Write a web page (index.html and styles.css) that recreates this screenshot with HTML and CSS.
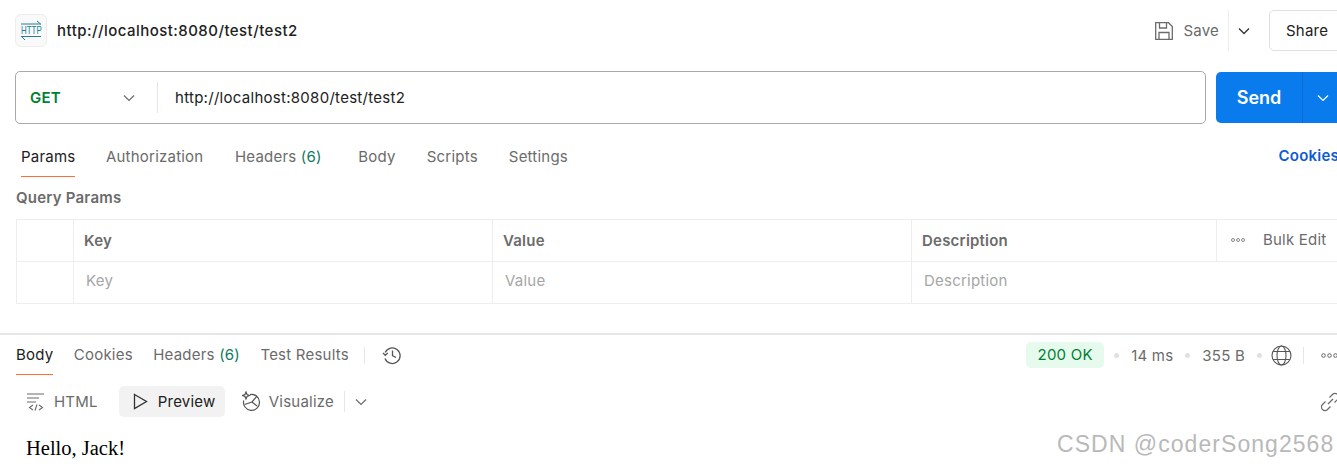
FILE: index.html
```html
<!DOCTYPE html>
<html lang="en">
<head>
<meta charset="utf-8">
<title>http://localhost:8080/test/test2</title>
<link rel="stylesheet" href="styles.css">
</head>
<body>
<div class="app">
  <header class="top">
    <div class="req-icon">
      <svg width="22" height="22" viewBox="0 0 22 22" fill="none" stroke="#217f8f" stroke-width="1">
        <path d="M1 5H21M17 2L20.500 5"/>
        <path d="M1 17.500H21M5 21L1.500 17.500"/>
      </svg>
      <span class="http">HTTP</span>
    </div>
    <div class="req-name">http://localhost:8080/test/test2</div>
    <div class="save">
      <svg width="20" height="20" viewBox="0 0 20 20" fill="none" stroke="#6b6b6b" stroke-width="1.300"><path d="M1.700 1.700H14.500L18.300 5.500V18.300H1.700Z"/><path d="M5.500 1.700V7H12.500V1.700"/><path d="M5 18.300V11.500H15V18.300"/></svg>
      <span>Save</span>
    </div>
    <div class="save-more"><svg width="12" height="8" viewBox="0 0 12 8" fill="none" stroke="#333" stroke-width="1.300"><path d="M1 1.500L6 6.500L11 1.500"/></svg></div>
    <div class="share">Share</div>
  </header>

  <section class="url-row">
    <div class="url-box">
      <div class="method"><span>GET</span><svg width="12" height="8" viewBox="0 0 12 8" fill="none" stroke="#6b6b6b" stroke-width="1.200"><path d="M1 1.500L6 6.500L11 1.500"/></svg></div>
      <div class="url">http://localhost:8080/test/test2</div>
    </div>
    <div class="send">
      <span class="send-label">Send</span>
      <span class="send-more"><svg width="12" height="8" viewBox="0 0 12 8" fill="none" stroke="#fff" stroke-width="1.200"><path d="M1 1.500L6 6.500L11 1.500"/></svg></span>
    </div>
  </section>

  <nav class="req-tabs">
    <span class="tab active">Params</span>
    <span class="tab t-auth">Authorization</span>
    <span class="tab t-head">Headers <i>(6)</i></span>
    <span class="tab t-body">Body</span>
    <span class="tab t-scr">Scripts</span>
    <span class="tab">Settings</span>
    <span class="cookies">Cookies</span>
  </nav>

  <h2 class="qp">Query Params</h2>

  <div class="table">
    <div class="cell"></div>
    <div class="cell head">Key</div>
    <div class="cell head">Value</div>
    <div class="cell head">Description</div>
    <div class="cell bulk">
      <svg width="14" height="4" viewBox="0 0 14 4" fill="none" stroke="#6b6b6b" stroke-width=".8"><circle cx="2" cy="2" r="1.500"/><circle cx="7" cy="2" r="1.500"/><circle cx="12" cy="2" r="1.500"/></svg>
      <span>Bulk Edit</span>
    </div>
    <div class="cell"></div>
    <div class="cell ph">Key</div>
    <div class="cell ph">Value</div>
    <div class="cell ph wide">Description</div>
  </div>

  <section class="response">
    <div class="res-bar">
      <span class="rtab active">Body</span>
      <span class="rtab">Cookies</span>
      <span class="rtab">Headers <i>(6)</i></span>
      <span class="rtab">Test Results</span>
      <span class="vsep"></span>
      <svg class="hist" width="20" height="20" viewBox="0 0 20 20" fill="none" stroke="#555" stroke-width="1.300"><path d="M3.200 7.500A7.800 7.800 0 1 1 3 13.500"/><path d="M1 8L3.300 10.300L5.800 8"/><path d="M10.500 5.500V10.500L14 12.500"/></svg>
      <div class="stats">
        <span class="ok">200 OK</span>
        <b class="dot"></b><span>14 ms</span>
        <b class="dot"></b><span>355 B</span>
        <b class="dot"></b>
        <svg width="21" height="21" viewBox="0 0 21 21" fill="none" stroke="#555" stroke-width="1.100"><circle cx="10.500" cy="10.500" r="9.500"/><ellipse cx="10.500" cy="10.500" rx="4.500" ry="9.500"/><path d="M2 6.500H19M2 14.500H19"/></svg>
        <span class="vsep s2"></span>
        <svg width="17" height="5" viewBox="0 0 17 5" fill="none" stroke="#555" stroke-width=".9"><circle cx="2.500" cy="2.500" r="1.800"/><circle cx="8.500" cy="2.500" r="1.800"/><circle cx="14.500" cy="2.500" r="1.800"/></svg>
      </div>
    </div>

    <div class="view-bar">
      <span class="view v-html">
        <svg width="18" height="20" viewBox="0 0 18 20" fill="none" stroke="#6b6b6b" stroke-width="1.100"><path d="M0 2H17M0 6H12M0 10H9"/><path d="M6 13L2.500 15.500L6 18M12 13L15.500 15.500L12 18M10 12.500L8 18.500"/></svg>
        HTML
      </span>
      <span class="view v-prev">
        <svg width="15" height="17" viewBox="0 0 15 17" fill="none" stroke="#333" stroke-width="1.300"><path d="M1.500 1.500L13.500 8.500L1.500 15.500Z"/></svg>
        Preview
      </span>
      <span class="view v-vis">
        <svg width="20" height="21" viewBox="0 0 20 21" fill="none" stroke="#555" stroke-width="1.200"><path d="M8 3.500A8 8 0 1 1 1.700 9.500"/><path d="M2.500 13.500L10 11L15 5"/><path d="M10 11L15 15"/><path d="M4 1L5 3.500L7.500 4.500L5 5.500L4 8L3 5.500L.5 4.500L3 3.500Z"/></svg>
        Visualize
      </span>
      <span class="vsep s3"></span>
      <svg class="v-chev" width="12" height="8" viewBox="0 0 12 8" fill="none" stroke="#6b6b6b" stroke-width="1.200"><path d="M1 1.500L6 6.500L11 1.500"/></svg>
      <svg class="link" width="20" height="20" viewBox="0 0 20 20" fill="none" stroke="#6b6b6b" stroke-width="1.200"><path d="M8 12L13 7"/><path d="M9.500 5.500L12.500 2.500A3.500 3.500 0 0 1 17.500 7.500L14.500 10.500"/><path d="M10.500 14.500L7.500 17.500A3.500 3.500 0 0 1 2.500 12.500L5.500 9.500"/></svg>
    </div>

    <p class="hello">Hello, Jack!</p>
  </section>
  <div class="watermark">CSDN @coderSong2568</div>
</div>
</body>
</html>
```
FILE: styles.css
```css
* { box-sizing: border-box; }
html, body { margin: 0; padding: 0; background: #fff; }
body { font-family: Inter, "Noto Sans", sans-serif; font-size: 15px; letter-spacing: .22px; color: #212121; }
.app { position: relative; width: 1337px; height: 466px; overflow: hidden; }
i { font-style: normal; color: #0f7a5f; }

.top { display: flex; align-items: center; height: 61px; width: 1360px; padding: 0 0 0 15px; }
.req-icon { position: relative; width: 32px; height: 33px; border: 1px solid #ededed; border-radius: 6px; background: #f9f9f9; display: flex; align-items: center; justify-content: center; }
.req-icon svg { position: absolute; left: 4px; top: 4px; }
.http { font-family: "Liberation Sans", sans-serif; font-size: 11px; line-height: 11px; color: #217f8f; transform: scaleX(.72); letter-spacing: 0; }
.req-name { margin-left: 10px; font-weight: 500; color: #212121; letter-spacing: .46px; }
.save { margin-left: auto; display: flex; align-items: center; gap: 9px; color: #6b6b6b; }
.save-more { width: 31px; height: 41px; margin-left: 9px; border-left: 1px solid #ededed; display: flex; align-items: center; justify-content: center; }
.share { width: 91px; height: 41px; margin-left: 10px; padding-left: 16px; border: 1px solid #e0e0e0; border-radius: 5px; display: flex; align-items: center; }

.url-row { display: flex; margin: 10px 0 0 15px; width: 1345px; gap: 10px; align-items: center; }
.url-box { flex: 0 0 1191px; height: 53px; border: 1px solid #a9a9a9; border-radius: 5px; display: flex; align-items: center; }
.method { width: 142px; height: 31px; padding: 0 22px 0 14px; border-right: 1px solid #e6e6e6; display: flex; align-items: center; justify-content: space-between; font-weight: 600; color: #007f31; }
.url { margin-left: 17px; color: #212121; letter-spacing: .28px; }
.send { flex: 0 0 136px; height: 51px; background: #097bed; border-radius: 5px; color: #fff; display: flex; align-items: center; }
.send-label { width: 86px; text-align: center; font-size: 18px; font-weight: 600; letter-spacing: 0; }
.send-more { width: 50px; height: 51px; padding-left: 14px; border-left: 1px solid #0a6cd0; display: flex; align-items: center; }

.req-tabs { display: flex; align-items: flex-start; height: 38px; margin-top: 15px; padding-left: 21px; position: relative; width: 1337px; color: #6b6b6b; }
.tab { margin-right: 31px; height: 38px; line-height: 36px; }
.tab.active { color: #212121; border-bottom: 1px solid #ff6c37; margin-right: 30.500px; }
.t-auth { margin-right: 31.500px; }
.t-head { margin-right: 36.500px; }
.cookies { margin-left: auto; margin-right: -2px; font-weight: 600; color: #0f5bd0; line-height: 34px; }

.qp { margin: 7px 0 0 16px; font-size: 15px; line-height: 28px; font-weight: 600; color: #6b6b6b; height: 28px; }

.table { margin: 7px 0 0 16px; width: 1330px; display: grid; grid-template-columns: 57px 419px 419px 305px 130px; grid-template-rows: 42px 42px; border-top: 1px solid #ededed; border-left: 1px solid #ededed; }
.cell { border-right: 1px solid #ededed; border-bottom: 1px solid #ededed; padding: 0 10px; display: flex; align-items: center; }
.head { font-weight: 600; color: #6b6b6b; }
.ph { color: #a6a6a6; padding: 0 0 4px 12px; }
.wide { grid-column: span 2; }
.bulk { color: #6b6b6b; padding: 0 0 2px 14px; gap: 18px; border-right: 0; }

.response { margin-top: 29px; border-top: 2px solid #e6e6e6; }
.res-bar { display: flex; align-items: center; height: 40px; padding-left: 16px; width: 1337px; color: #6b6b6b; }
.rtab { margin-right: 20.400px; height: 40px; line-height: 40px; }
.rtab.active { color: #212121; border-bottom: 1px solid #ff6c37; }
.vsep { width: 1px; height: 17px; background: #e6e6e6; }
.res-bar > .vsep { margin-left: -5px; }
.hist { margin-left: 17px; }
.stats { margin-left: auto; display: flex; align-items: center; margin-right: -1px; }
.ok { background: #e6fbee; color: #007f31; padding: 0 11.500px; height: 26px; line-height: 26px; border-radius: 5px; margin-right: 10px; }
.dot { width: 5px; height: 5px; border-radius: 50%; background: #e0e0e0; margin-right: 12px; }
.stats span:not(.ok):not(.vsep) { margin-right: 12px; }
.stats svg { margin-left: -3px; }
.s2 { margin: 0 20px 0 11px; }

.view-bar { display: flex; align-items: center; height: 31px; margin-top: 11px; padding-left: 27px; color: #6b6b6b; position: relative; }
.view { display: flex; align-items: center; height: 31px; }
.v-html { gap: 9px; }
.v-prev { margin-left: 21px; width: 106px; padding-left: 14px; gap: 10px; background: #f2f2f2; border-radius: 5px; color: #212121; }
.v-vis { margin-left: 17px; gap: 7px; }
.s3 { margin-left: 10px; height: 21px; }
.v-chev { margin-left: 10px; }
.link { margin-left: auto; margin-right: -3px; }

.hello { margin: 18px 0 0 26px; font-family: "Liberation Serif", serif; font-size: 20.500px; line-height: 26px; letter-spacing: 0; color: #000; }

.watermark { position: absolute; left: 1057px; top: 430px; font-family: "Liberation Sans", sans-serif; font-size: 23px; line-height: 28px; color: #b9b9b9; white-space: nowrap; letter-spacing: 1.050px; }
```
